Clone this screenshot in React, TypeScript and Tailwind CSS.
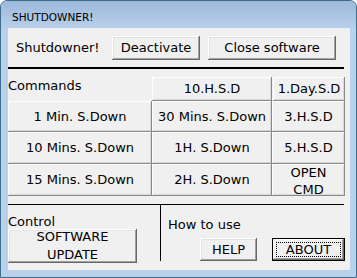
import React from "react";

const font = { fontFamily: '"DejaVu Sans", Verdana, sans-serif' };

const btn =
  "flex items-center justify-center bg-[#f0f0f0] text-black text-[13px] leading-[16px] shadow-[inset_-1px_-1px_#696969,inset_1px_1px_#ffffff,inset_-2px_-2px_#a0a0a0,inset_2px_2px_#e3e3e3]";

const cell =
  "flex items-center justify-center bg-[#f0f0f0] text-black text-[13px] leading-[16px] shadow-[inset_-1px_-1px_#8a8a8a,inset_1px_1px_#ffffff,inset_-2px_-2px_#d8d8d8]";

export default function App() {
  return (
    <div
      className="w-[357px] h-[278px] flex flex-col rounded-t-[7px] border border-[#3f6f8f] bg-[#b9d1ea] overflow-hidden"
      style={font}
    >
      <div className="h-[27px] shrink-0 pl-[11px] pt-[10px] bg-gradient-to-b from-[#9db8d9] to-[#b7cfea] text-[10.5px] leading-[13px] text-black">
        SHUTDOWNER!
      </div>
      <div className="ml-[7px] mr-[6px] h-[242px] bg-[#f0f0f0] flex flex-col">
        {/* top row */}
        <div className="flex items-center pt-[8px] h-[24px] box-content">
          <div className="w-[104px] pl-[8px] text-[13px] leading-[16px]">Shutdowner!</div>
          <div className={`${btn} w-[88px] h-[24px]`}>Deactivate</div>
          <div className={`${btn} w-[128px] h-[24px] ml-[8px]`}>Close software</div>
        </div>
        <div className="mt-[7px] w-[336px] h-[2px] bg-black" />
        {/* commands grid */}
        <div className="mt-[8px] grid grid-cols-[144px_120px_73px] grid-rows-[24px_31px_32px_32px]">
          <div className="text-[13px] leading-[16px] self-start pt-[1px]">Commands</div>
          <div className={cell}>10.H.S.D</div>
          <div className={`${cell} ml-[1px]`}>1.Day.S.D</div>
          <div className={cell}>1 Min. S.Down</div>
          <div className={cell}>30 Mins. S.Down</div>
          <div className={cell}>3.H.S.D</div>
          <div className={cell}>10 Mins. S.Down</div>
          <div className={cell}>1H. S.Down</div>
          <div className={cell}>5.H.S.D</div>
          <div className={cell}>15 Mins. S.Down</div>
          <div className={cell}>2H. S.Down</div>
          <div className={`${cell} flex-col leading-[17px] pt-[1px]`}>
            <span>OPEN</span>
            <span>CMD</span>
          </div>
        </div>
        <div className="mt-[8px] w-[336px] h-[1px] bg-black" />
        {/* bottom */}
        <div className="flex">
          <div className="w-[152px] flex flex-col">
            <div className="pt-[10px] text-[13px] leading-[14px]">Control</div>
            <div className={`${btn} w-[129px] h-[34px] flex-col leading-[18px]`}>
              <span>SOFTWARE</span>
              <span>UPDATE</span>
            </div>
          </div>
          <div className="w-[1px] h-[56px] bg-black" />
          <div className="flex flex-col pl-[7px]">
            <div className="pt-[12px] text-[13px] leading-[16px]">How to use</div>
            <div className="flex mt-[5px]">
              <div className={`${btn} ml-[32px] w-[57px] h-[23px]`}>HELP</div>
              <div className="ml-[15px] w-[73px] h-[23px] border border-black bg-[#f0f0f0] shadow-[inset_-1px_-1px_#696969,inset_1px_1px_#ffffff,inset_-2px_-2px_#a0a0a0] p-[3px]">
                <div className="w-full h-full border border-dotted border-black flex items-center justify-center text-[13px] leading-[16px]">
                  ABOUT
                </div>
              </div>
            </div>
          </div>
        </div>
      </div>
    </div>
  );
}
